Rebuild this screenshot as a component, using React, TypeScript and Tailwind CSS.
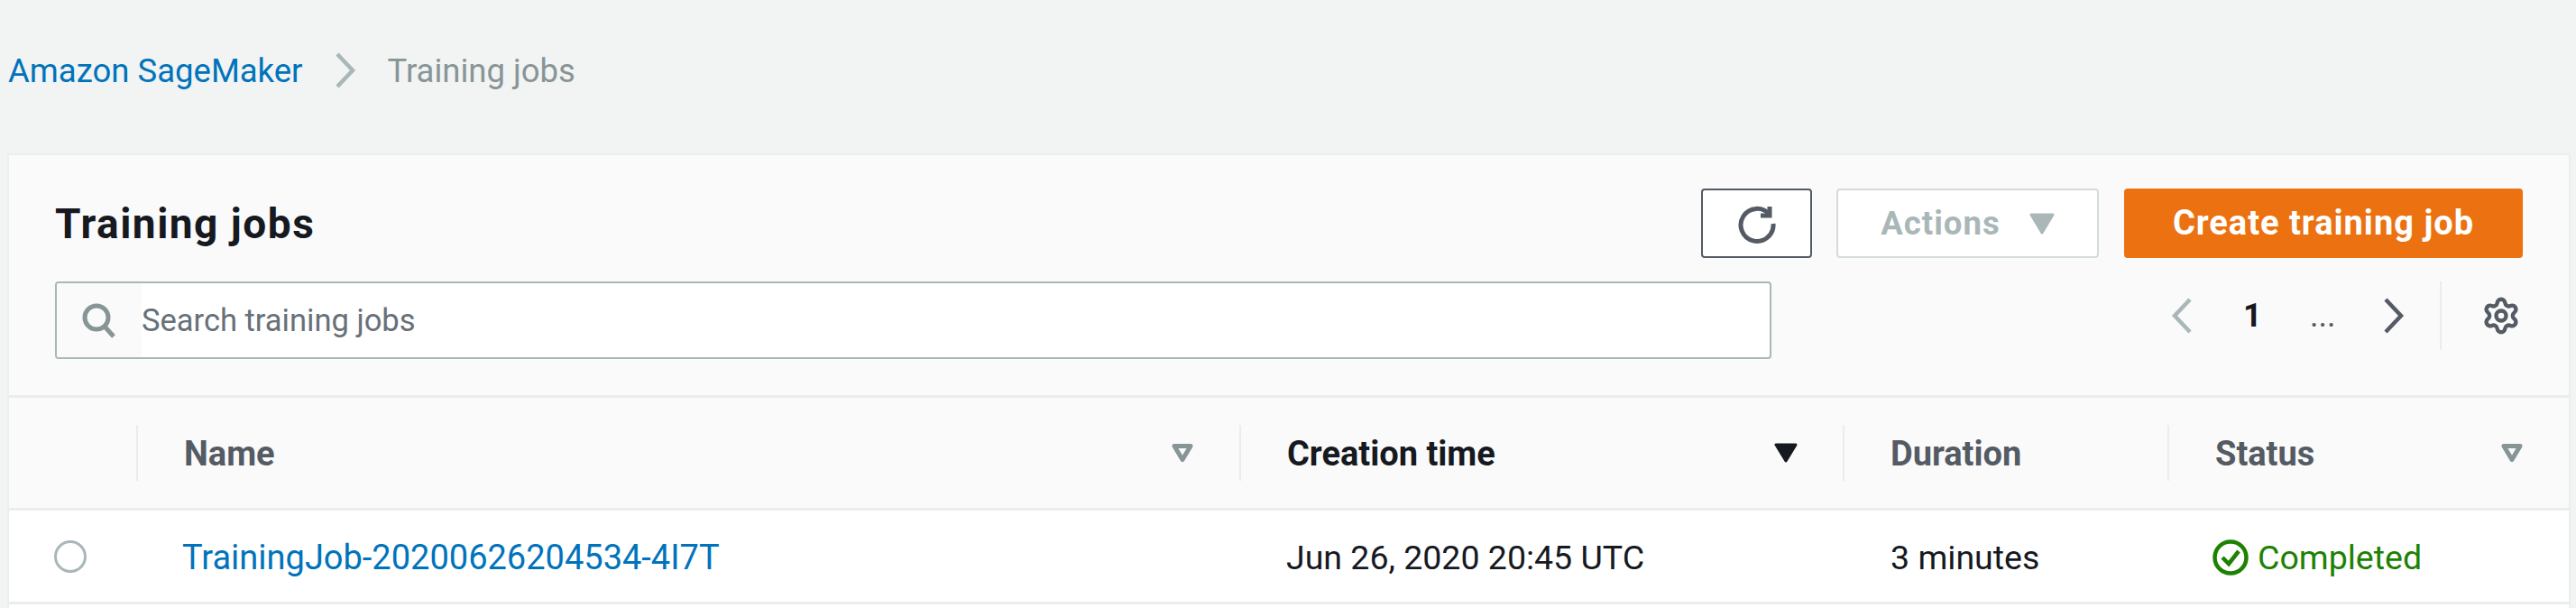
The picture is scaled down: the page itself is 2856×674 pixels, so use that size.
import React from "react";
import { Settings } from "lucide-react";

const Chevron = ({ left = false, color, className }: { left?: boolean; color: string; className: string }) => (
  <svg viewBox="0 0 24 40" className={className} fill="none">
    <polyline points={left ? "21,2 4,20 21,38" : "3,2 20,20 3,38"} stroke={color} strokeWidth="4.5" />
  </svg>
);

const SortIcon = ({ filled = false }: { filled?: boolean }) => (
  <svg viewBox="0 0 26 22" className="w-[26px] h-[22px]">
    <path
      d={filled ? "M2 2 H24 L13 20 Z" : "M4 3.5 H22 L13 18.5 Z"}
      fill={filled ? "#16191f" : "none"}
      stroke={filled ? "#16191f" : "#879596"}
      strokeWidth={filled ? 3 : 5}
      strokeLinejoin="round"
    />
  </svg>
);

const Head = ({ label, dark, sort, filled }: { label: string; dark?: boolean; sort?: boolean; filled?: boolean }) => (
  <div className="h-[62px] flex items-center justify-between border-l-2 border-[#eaeded] pl-[51px] pr-[50px]">
    <span className={`text-[38px] pt-[2px] font-bold ${dark ? "text-[#16191f]" : "text-[#545b64]"}`}>{label}</span>
    {sort && <SortIcon filled={filled} />}
  </div>
);

export default function App() {
  return (
    <div className="h-[674px] w-[2856px] overflow-hidden bg-[#f2f3f3] flex flex-col font-['Roboto',sans-serif]">
      <nav className="h-[170px] shrink-0 flex items-start pl-[9px] pt-[57px] text-[36.5px] leading-[44px]">
        <a className="text-[#0073bb]">Amazon SageMaker</a>
        <Chevron color="#aab7b8" className="w-[24px] h-[40px] ml-[35px] mr-[35px] mt-[1px]" />
        <span className="text-[#879596]">Training jobs</span>
      </nav>

      <section className="ml-[8px] mr-[6px] flex-1 flex flex-col bg-white border-x-2 border-t-2 border-[#eceeee]">
        <header className="h-[269px] shrink-0 bg-[#fafafa] border-b-[3px] border-[#eaeded] pl-[51px] pr-[51px] pt-[37px]">
          <div className="flex items-center h-[77px]">
            <h1 className="text-[46px] pt-[2px] tracking-[1.5px] font-bold text-[#16191f] flex-1">Training jobs</h1>
            <button className="w-[123px] h-[77px] border-2 border-[#545b64] rounded-[4px] bg-white flex items-center justify-center">
              <svg viewBox="0 0 44 44" className="w-[44px] h-[44px]" fill="none">
                <path d="M36 12 A18 18 0 1 0 40 22" stroke="#545b64" strokeWidth="5" />
                <path d="M36 3 V13 H26" stroke="#545b64" strokeWidth="5" />
              </svg>
            </button>
            <button className="w-[291px] h-[77px] ml-[27px] border-2 border-[#d5dbdb] rounded-[4px] bg-white flex items-center justify-center gap-[32px] text-[36.5px] tracking-[1px] font-bold text-[#aab7b8]">
              <span className="pt-[2px]">Actions</span>
              <svg viewBox="0 0 28 24" className="w-[28px] h-[24px]"><path d="M2 2 H26 L14 22 Z" fill="#aab7b8" stroke="#aab7b8" strokeWidth="3" strokeLinejoin="round" /></svg>
            </button>
            <button className="w-[442px] h-[77px] ml-[28px] rounded-[4px] bg-[#ec7211] text-[38px] tracking-[1px] font-bold text-white">Create training job</button>
          </div>
          <div className="flex items-center mt-[26px] h-[86px]">
            <div className="w-[1903px] h-[86px] border-2 border-[#aab7b8] rounded-[4px] bg-white flex overflow-hidden">
              <div className="w-[94px] bg-[#fafafa] flex items-center justify-center">
                <svg viewBox="0 0 40 40" className="w-[40px] h-[40px]" fill="none">
                  <circle cx="17" cy="17" r="13" stroke="#879596" strokeWidth="5" />
                  <path d="M26 27 L36 38" stroke="#879596" strokeWidth="5" />
                </svg>
              </div>
              <span className="self-center pt-[2px] text-[34.5px] text-[#687078]">Search training jobs</span>
            </div>
            <div className="flex-1 flex items-center h-[76px] mb-[10px] pl-[443px] text-[#16191f]">
              <Chevron left color="#aab7b8" className="w-[24px] h-[40px] shrink-0" />
              <span className="ml-[56px] w-[20px] text-[36px] font-bold">1</span>
              <span className="ml-[54px] w-[28px] text-[36px] text-[#545b64] leading-[32px]">...</span>
              <Chevron color="#545b64" className="w-[24px] h-[40px] ml-[53px] shrink-0" />
              <div className="ml-[39px] w-[2px] h-[76px] bg-[#eaeded] shrink-0" />
              <Settings className="ml-[44px] w-[44px] h-[44px] shrink-0 text-[#545b64]" strokeWidth={2.4} />
            </div>
          </div>
        </header>

        <div className="grid grid-cols-[141px_1223px_669px_360px_1fr] shrink-0">
          <div className="h-[125px] bg-[#fafafa] col-span-5 grid grid-cols-subgrid items-center border-b-[3px] border-[#eaeded]">
            <div />
            <Head label="Name" sort />
            <Head label="Creation time" dark sort filled />
            <Head label="Duration" />
            <Head label="Status" sort />
          </div>
          <div className="h-[104px] col-span-5 grid grid-cols-subgrid items-center bg-white border-b-[3px] border-[#eaeded] text-[37.5px] text-[#16191f]">
            <div className="flex pl-[50px]">
              <div className="w-[36px] h-[36px] rounded-full border-[3px] border-[#aab7b8]" />
            </div>
            <a className="pl-[51px] pt-[3px] text-[38px] text-[#0073bb]">TrainingJob-20200626204534-4I7T</a>
            <div className="pl-[52px] pt-[3px]">Jun 26, 2020 20:45 UTC</div>
            <div className="pl-[53px] pt-[3px]">3 minutes</div>
            <div className="pl-[50px] pt-[3px] flex items-center text-[#1d8102]">
              <svg viewBox="0 0 40 40" className="w-[40px] h-[40px] mr-[10px]" fill="none">
                <circle cx="20" cy="20" r="17.5" stroke="#1d8102" strokeWidth="4.5" />
                <path d="M11 20 L18 27 L29 13" stroke="#1d8102" strokeWidth="4.5" />
              </svg>
              Completed
            </div>
          </div>
        </div>
      </section>
    </div>
  );
}
